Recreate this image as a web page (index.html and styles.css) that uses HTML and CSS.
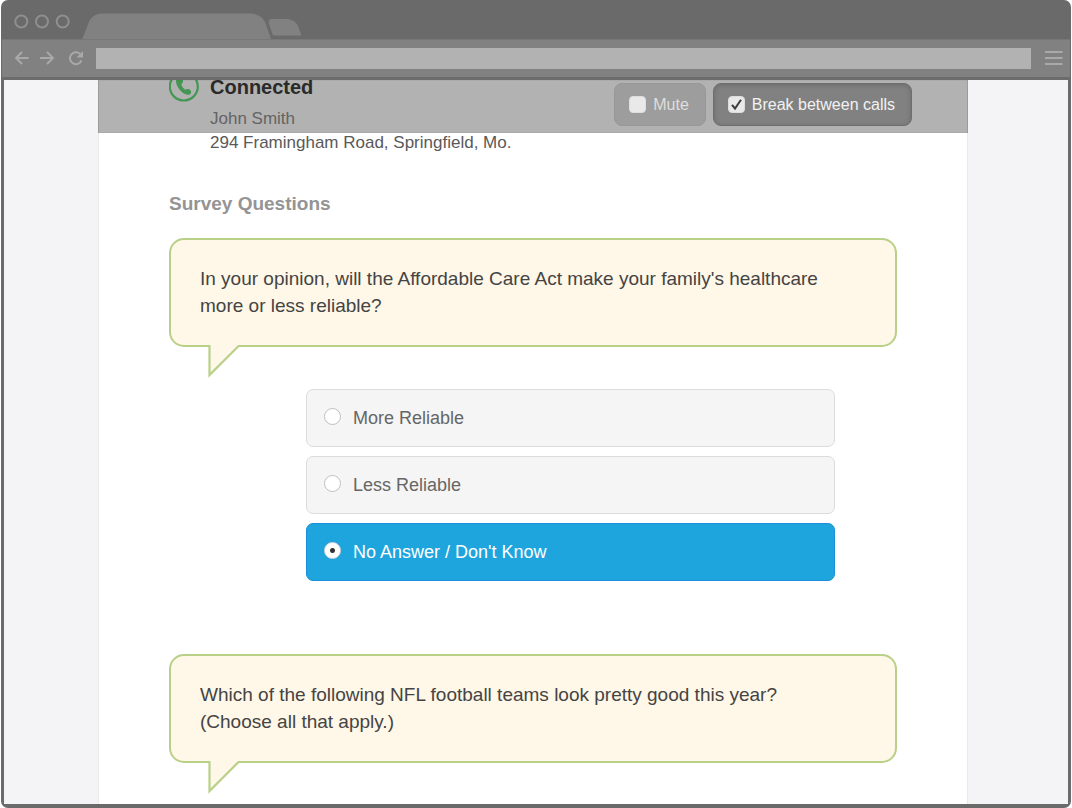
FILE: index.html
```html
<!DOCTYPE html>
<html lang="en">
<head>
<meta charset="utf-8">
<title>Survey call</title>
<link rel="stylesheet" href="styles.css">
</head>
<body>
<div class="window">
  <header class="titlebar">
    <svg class="lights" width="58" height="16" viewBox="0 0 58 16" aria-hidden="true">
      <g fill="none" stroke="#8f8f8f" stroke-width="2"><circle cx="8.300" cy="8.500" r="6"/><circle cx="29" cy="8.500" r="6"/><circle cx="49.700" cy="8.500" r="6"/></g>
    </svg>
    <svg class="tabs" width="222" height="26" viewBox="0 0 222 26" aria-hidden="true">
      <path fill="#818181" d="M0 26C3 21 4 15 7 9C9 4 14 0.500 20 0.500H168C175 0.500 181 4 183 9L189 26Z"/>
      <path fill="#818181" d="M191 22.500L187 11C186 8 187 6 190 6H204C210 6 214 9 216 13L219.500 22.500Z"/>
    </svg>
  </header>
  <nav class="toolbar" aria-label="Browser">
    <button class="nav-btn" aria-label="Back"><svg width="16" height="16" viewBox="0 0 16 16"><path d="M14.500 8H2M8 2L2 8L8 14"/></svg></button>
    <button class="nav-btn" aria-label="Forward"><svg width="16" height="16" viewBox="0 0 16 16"><path d="M1 8H14M8 2L14 8L8 14"/></svg></button>
    <button class="nav-btn" aria-label="Reload"><svg width="16" height="16" viewBox="0 0 16 16"><path d="M13.500 10.500A6 6 0 1 1 12 3.800"/><path class="solid" d="M15 1V7.500H8.500Z"/></svg></button>
    <input class="address" type="text" aria-label="Address">
    <button class="nav-btn menu" aria-label="Menu"><svg width="18" height="16" viewBox="0 0 18 16"><path d="M0 2H17.500M0 8H17.500M0 14H17.500"/></svg></button>
  </nav>
  <div class="viewport">
    <main class="sheet">
      <div class="call-bar">
        <label class="toggle"><span class="check"><input type="checkbox"></span>Mute</label>
        <label class="toggle on"><span class="check"><input type="checkbox" checked><svg width="17" height="17" viewBox="0 0 17 17" aria-hidden="true"><path d="M4 8.800L7 12.500L13 3.800"/></svg></span>Break between calls</label>
      </div>
      <div class="content">
        <section class="caller">
          <svg class="phone" width="32" height="32" viewBox="0 0 32 32" aria-hidden="true">
            <circle cx="14.800" cy="16.500" r="14" fill="none" stroke="#62d877" stroke-width="2.200"/>
            <path fill="#62d877" d="M8 9C9 7.500 10.500 7 12 7.500C13.500 8.500 14.300 10.500 14 12C13.500 13.200 12.300 13.200 12.400 14.500C12.800 16.500 14.500 18.500 16 19.500C17.200 19.900 18 18.600 19.500 19C21 19.500 22.200 20.800 22.200 22.200C21.800 24 20.500 25 18.800 24.800C13 24 7 17 7 11C7 10.200 7.500 9.500 8 9Z"/>
          </svg>
          <div>
            <h1 class="status">Connected</h1>
            <p class="name">John Smith</p>
            <p class="street">294 Framingham Road, Springfield, Mo.</p>
          </div>
        </section>
        <h2 class="heading">Survey Questions</h2>
        <section class="question">
          <div class="bubble">
            <p id="q1">In your opinion, will the Affordable Care Act make your family's healthcare more or less reliable?</p>
            <svg class="tail" width="34" height="34" viewBox="0 0 34 34" aria-hidden="true"><path d="M1.500 0V31L30.500 2H34V0Z" fill="#fff7e7"/><path d="M0 2H1.500V31L30.500 2H34" fill="none" stroke="#b8d087" stroke-width="2.200"/></svg>
          </div>
          <div class="options" role="radiogroup" aria-labelledby="q1">
            <label class="option"><input type="radio" name="q1">More Reliable</label>
            <label class="option"><input type="radio" name="q1">Less Reliable</label>
            <label class="option selected"><input type="radio" name="q1" checked>No Answer / Don't Know</label>
          </div>
        </section>
        <section class="question">
          <div class="bubble">
            <p>Which of the following NFL football teams look pretty good this year?<br>(Choose all that apply.)</p>
            <svg class="tail" width="34" height="34" viewBox="0 0 34 34" aria-hidden="true"><path d="M1.500 0V31L30.500 2H34V0Z" fill="#fff7e7"/><path d="M0 2H1.500V31L30.500 2H34" fill="none" stroke="#b8d087" stroke-width="2.200"/></svg>
          </div>
        </section>
      </div>
    </main>
  </div>
</div>
</body>
</html>
```
FILE: styles.css
```css
* { box-sizing: border-box; }
body {
  margin: 0;
  background: #fff;
  font-family: "Liberation Sans", Arial, sans-serif;
  color: #444;
}
h1, h2, p { margin: 0; }
svg { display: block; }

.window {
  display: flex;
  flex-direction: column;
  height: 100vh;
  margin: 0 1px;
  padding: 0 3px 4px;
  border-radius: 7px;
  background: #6a6a6a;
  overflow: hidden;
}

/* Browser chrome */
.titlebar {
  display: flex;
  flex: none;
  height: 39px;
  padding-left: 9px;
}
.lights { margin-top: 13px; }
.tabs { margin: 13px 0 0 11px; }
.toolbar {
  display: flex;
  flex: none;
  align-items: center;
  height: 41px;
  margin: 0 -2px;
  padding: 1px 7px 2px 12px;
  background: #818181;
  border-top: 1px solid #777;
  border-bottom: 3px solid #6c6c6c;
}
.nav-btn {
  padding: 0;
  margin-right: 9px;
  border: 0;
  background: none;
}
.nav-btn path { fill: none; stroke: #a9a9a9; stroke-width: 2; }
.nav-btn .solid { fill: #a9a9a9; stroke: none; }
.nav-btn:nth-child(2) { margin-right: 13px; }
.nav-btn:nth-child(3) { margin-right: 12px; }
.address {
  flex: 1;
  min-width: 0;
  height: 21px;
  padding: 0 6px;
  border: 0;
  background: #b2b2b2;
}
.toolbar .menu { margin: 0 0 0 14px; }

/* Page */
.viewport {
  flex: 1;
  min-height: 0;
  padding: 0 100px 0 94px;
  background: #f4f4f6;
  overflow: hidden;
}
.sheet {
  display: flow-root;
  position: relative;
  min-height: 100%;
  background: #fff;
  box-shadow: inset 1px 0 #e9e9eb, inset -1px 0 #e9e9eb;
}
.call-bar {
  position: absolute;
  inset: 0 0 auto;
  display: flex;
  justify-content: flex-end;
  gap: 7px;
  padding: 3px 56px 7px;
  background: rgba(0, 0, 0, .3);
  box-shadow: inset 0 0 0 1px rgba(0, 0, 0, .04);
}
.toggle {
  display: flex;
  align-items: center;
  gap: 7px;
  height: 43px;
  padding: 0 16px 0 14px;
  border: 1px solid #979797;
  border-radius: 8px;
  background: #9d9d9d;
  color: #dedede;
  font-size: 16px;
}
.toggle.on {
  border-color: #6e6e6e;
  background: #818181;
  box-shadow: inset 0 1px 5px rgba(0, 0, 0, .18);
  color: #f2f2f2;
}
.check { display: grid; }
.check > * { grid-area: 1 / 1; }
.check input {
  appearance: none;
  width: 17px;
  height: 17px;
  margin: 0;
  border: 1px solid #ddd;
  border-radius: 4px;
  background: #e9e9e9;
}
.check svg { z-index: 1; pointer-events: none; }
.check path { fill: none; stroke: #3c3c3c; stroke-width: 2; }

.content { margin-top: -10px; padding: 0 71px; }
.caller { display: flex; gap: 9px; }
.status { color: #3d3d3d; font-size: 20px; line-height: 34px; }
.name { color: #909090; font-size: 17px; line-height: 30px; }
.street { color: #595959; font-size: 17px; line-height: 17px; }
.heading {
  margin: 41px 0 22px;
  color: #949494;
  font-size: 19px;
  line-height: 24px;
}
.question { margin-bottom: 73px; }
.bubble {
  position: relative;
  padding: 25px 29px 26px;
  border: 2px solid #b8d087;
  border-radius: 15px;
  background: #fff7e7;
  font-size: 19px;
  line-height: 27px;
}
.tail { position: absolute; left: 37px; top: calc(100% - 1px); }
.options {
  display: grid;
  gap: 9px;
  margin: 42px 62px 0 137px;
}
.option {
  display: flex;
  align-items: center;
  gap: 12px;
  height: 58px;
  padding: 0 17px;
  border: 1px solid #dcdcdc;
  border-radius: 7px;
  background: #f5f5f5;
  color: #666;
  font-size: 18px;
}
.option input {
  appearance: none;
  width: 17px;
  height: 17px;
  margin: 0 0 4px;
  border: 1px solid #c0c0c0;
  border-radius: 50%;
  background: #fff;
}
.option input:checked {
  border-color: #d8d8d8;
  background: radial-gradient(circle, #333 2px, #fff 3px);
}
.option.selected {
  border-color: #1b8fd9;
  background: #1fa5dd;
  color: #fff;
}
```
